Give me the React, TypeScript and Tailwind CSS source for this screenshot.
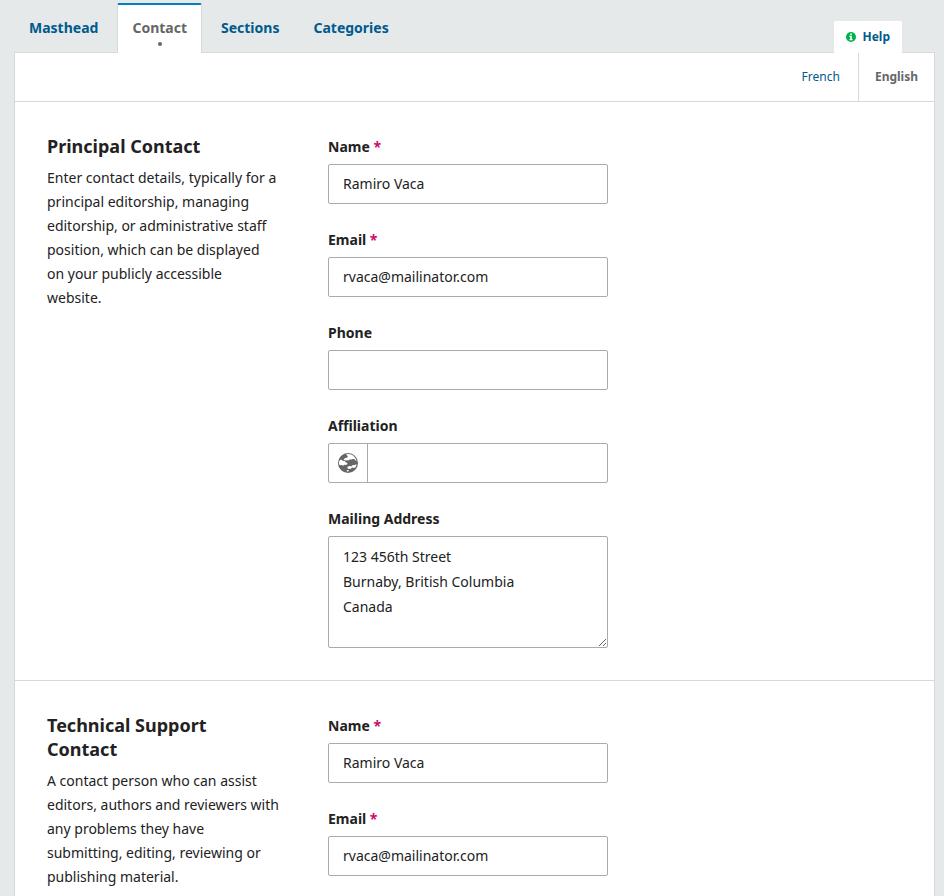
import React, { useId } from 'react';

const inputBox = 'rounded-[2px] border border-[#aaaaaa] bg-white';

function GlobeIcon() {
  return (
    <svg viewBox="0 0 20 20" className="size-5" aria-hidden="true">
      <circle cx="10" cy="10" r="10" fill="#666666" />
      <g fill="#ffffff">
        <path d="M8.200 1.300c3.200-.7 6.500.4 8.600 3 .9 1.100 1.500 2.300 1.700 3.600l-1.100-.3-.7-1.400-1.900-.2-1.300.6-1.900-.1-1.300 1-2.100-.3-1.200.4-1.400-1.200 1.500-1.300 1.800-.4 1-1.300z" />
        <path d="M1.500 7.400l1.700-.9 1.500 1.300 2 .2 1 1.600 1.400.2.4 1.200-1.700 1.100-1.600-.3-.9.9-1.600-.6-1.500.2-1-.9C.8 10 1 8.500 1.500 7.400z" />
        <path d="M18.600 11.200c-.1 1.100-.5 2.100-1 3l-1.700.7-1.700-.4-1.400 1.300-2.100.1-1.400-.9.300-1.300 2-.6 1.600.3 1.200-1.200 2-.1z" />
        <path d="M8.600 17.500l1.200-.6 1.200.7-.7.900-1.300-.1z" />
      </g>
    </svg>
  );
}

function InfoIcon() {
  return (
    <svg viewBox="0 0 10 10" className="size-[10px]" aria-hidden="true">
      <circle cx="5" cy="5" r="5" fill="#00b24e" />
      <path fill="#ffffff" d="M4.200 1.400h1.600v1.500H4.200zM3.400 3.700h2.400v3.200h.8v1.300H3.400V6.900h.8V5h-.8z" />
    </svg>
  );
}

type FieldProps = {
  label: string;
  value?: string;
  required?: boolean;
  kind?: 'text' | 'multilingual' | 'textarea';
};

function Field({ label, value = '', required = false, kind = 'text' }: FieldProps) {
  const id = useId();
  return (
    <div className="flex w-[280px] max-w-full flex-col gap-1">
      <label htmlFor={id} className="text-sm leading-[26px] font-bold">
        {label}
        {required && <span className="text-[#d00a6c]"> *</span>}
      </label>
      {kind === 'text' && (
        <input id={id} type="text" defaultValue={value} required={required} className={`${inputBox} h-10 w-full px-[14px] pb-[2px] text-sm`} />
      )}
      {kind === 'multilingual' && (
        <div className={`${inputBox} flex h-10 w-full`}>
          <div className="flex w-[39px] items-center justify-center border-r border-[#aaaaaa]">
            <GlobeIcon />
          </div>
          <input id={id} type="text" defaultValue={value} className="min-w-0 flex-1 px-[14px] pb-[2px] text-sm" />
        </div>
      )}
      {kind === 'textarea' && (
        <textarea id={id} defaultValue={value} className={`${inputBox} block h-28 w-full resize px-[14px] py-[7px] text-sm leading-[25px]`} />
      )}
    </div>
  );
}

type GroupProps = { title: string; description: string; fields: FieldProps[] };

function FieldGroup({ title, description, fields }: GroupProps) {
  return (
    <section className="flex gap-12 border-t border-[#d8d8d8] px-8 py-8">
      <div className="w-[233px] shrink-0">
        <h2 className="text-lg leading-6 font-bold">{title}</h2>
        <p className="mt-2 text-sm leading-6">{description}</p>
      </div>
      <div className="flex min-w-0 flex-1 flex-col gap-[23px]">
        {fields.map((field) => (
          <Field key={field.label} {...field} />
        ))}
      </div>
    </section>
  );
}

const tabs = ['Masthead', 'Contact', 'Sections', 'Categories'];

const groups: GroupProps[] = [
  {
    title: 'Principal Contact',
    description:
      'Enter contact details, typically for a principal editorship, managing editorship, or administrative staff position, which can be displayed on your publicly accessible website.',
    fields: [
      { label: 'Name', value: 'Ramiro Vaca', required: true },
      { label: 'Email', value: 'rvaca@mailinator.com', required: true },
      { label: 'Phone' },
      { label: 'Affiliation', kind: 'multilingual' },
      { label: 'Mailing Address', kind: 'textarea', value: '123 456th Street\nBurnaby, British Columbia\nCanada' },
    ],
  },
  {
    title: 'Technical Support Contact',
    description:
      'A contact person who can assist editors, authors and reviewers with any problems they have submitting, editing, reviewing or publishing material.',
    fields: [
      { label: 'Name', value: 'Ramiro Vaca', required: true },
      { label: 'Email', value: 'rvaca@mailinator.com', required: true },
    ],
  },
];

export default function App() {
  return (
    <div className="h-screen overflow-hidden bg-[#e5e9ea] font-['Noto_Sans',sans-serif] text-[#222222]">
      <div className="pt-[3px] pr-[9px] pl-[14px]">
        <div className="flex items-end justify-between pr-[33px]">
          <div role="tablist" className="flex gap-1">
            {tabs.map((tab) =>
              tab === 'Contact' ? (
                <button
                  key={tab}
                  role="tab"
                  aria-selected="true"
                  className="relative z-10 -mb-px h-[50px] rounded-t-[2px] border-x border-t-2 border-x-[#d8d8d8] border-t-[#007ebf] bg-white px-[14px] pb-[2px] text-sm font-bold text-[#666666]"
                >
                  {tab}
                  <span className="absolute bottom-[7px] left-1/2 size-1 -translate-x-1/2 rounded-full bg-[#666666]" />
                </button>
              ) : (
                <button key={tab} role="tab" aria-selected="false" className="h-[49px] px-[15px] text-sm font-bold text-[#005a8c]">
                  {tab}
                </button>
              ),
            )}
          </div>
          <button className="relative z-10 -mb-px flex h-8 items-center gap-[6px] rounded-t-[2px] bg-white px-3 text-xs font-bold text-[#005a8c]">
            <InfoIcon />
            Help
          </button>
        </div>
        <main className="border border-[#d8d8d8] bg-white">
          <div className="flex h-12 justify-end text-xs">
            <button className="px-[18px] text-[#005a8c]">French</button>
            <button aria-current="true" className="border-l border-[#d8d8d8] px-4 font-bold text-[#666666]">
              English
            </button>
          </div>
          <form>
            {groups.map((group) => (
              <FieldGroup key={group.title} {...group} />
            ))}
          </form>
        </main>
      </div>
    </div>
  );
}
